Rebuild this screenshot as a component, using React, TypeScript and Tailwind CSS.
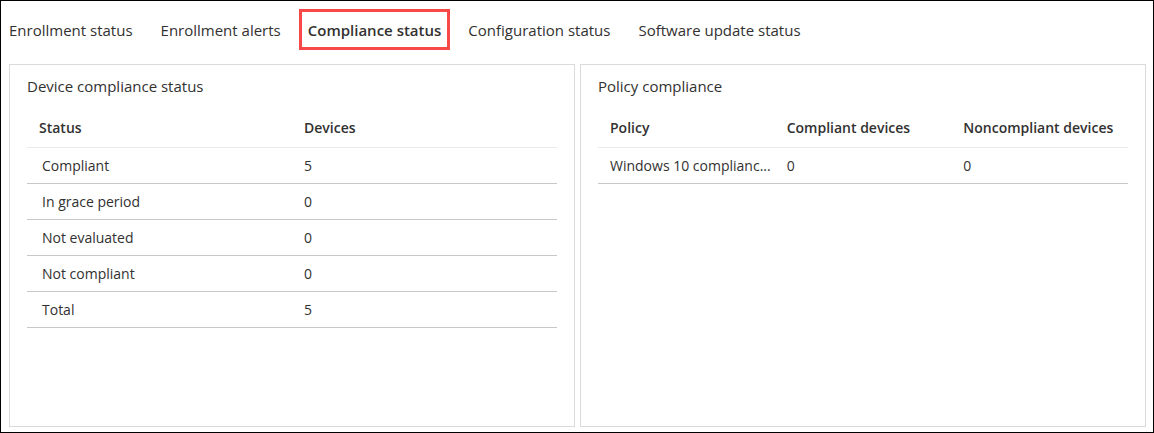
import { useState } from "react";
import clsx from "clsx";

const tabs = [
  "Enrollment status",
  "Enrollment alerts",
  "Compliance status",
  "Configuration status",
  "Software update status",
];

const deviceRows = [
  ["Compliant", "5"],
  ["In grace period", "0"],
  ["Not evaluated", "0"],
  ["Not compliant", "0"],
  ["Total", "5"],
];

const policyRows = [["Windows 10 complianc...", "0", "0"]];

type PanelProps = {
  title: string;
  columns: string[];
  rows: string[][];
  indentRows?: boolean;
};

function Panel({ title, columns, rows, indentRows = false }: PanelProps) {
  return (
    <section className="min-w-0 flex-1 border border-[#dadada] px-[17px] pt-[11px]">
      <h2 className="text-[15px] leading-5">{title}</h2>
      <table className="mt-[11px] w-full table-fixed border-collapse text-left text-[14px] leading-5">
        <thead>
          <tr className="h-10 border-b border-[#eaeaea]">
            {columns.map((column) => (
              <th key={column} scope="col" className="truncate pt-0.5 pl-3 font-semibold">
                {column}
              </th>
            ))}
          </tr>
        </thead>
        <tbody>
          {rows.map((row) => (
            <tr key={row[0]} className="h-9 border-b border-[#c8c8c8]">
              {row.map((cell, i) => (
                <td
                  key={columns[i]}
                  className={clsx("truncate pt-0.5", indentRows && i === 0 ? "pl-[15px]" : "pl-3")}
                >
                  {cell}
                </td>
              ))}
            </tr>
          ))}
        </tbody>
      </table>
    </section>
  );
}

export default function App() {
  const [active, setActive] = useState("Compliance status");

  return (
    <main className="flex min-h-screen flex-col border border-black bg-white pt-2 pr-[7px] pb-[5px] pl-2 font-['Open_Sans','Noto_Sans',sans-serif] text-[#323130]">
      <nav aria-label="Device reports" className="flex items-center gap-7 text-[15px] leading-5">
        {tabs.map((tab) => (
          <button
            key={tab}
            type="button"
            aria-current={tab === active ? "page" : undefined}
            onClick={() => setActive(tab)}
            className={clsx(
              "h-[41px] whitespace-nowrap",
              tab === active && "-mx-[10px] border-3 border-[#f94848] px-[6px] font-semibold",
            )}
          >
            {tab}
          </button>
        ))}
      </nav>
      <div className="mt-[14px] flex flex-1 gap-[5px]">
        <Panel title="Device compliance status" columns={["Status", "Devices"]} rows={deviceRows} indentRows />
        <Panel
          title="Policy compliance"
          columns={["Policy", "Compliant devices", "Noncompliant devices"]}
          rows={policyRows}
        />
      </div>
    </main>
  );
}
